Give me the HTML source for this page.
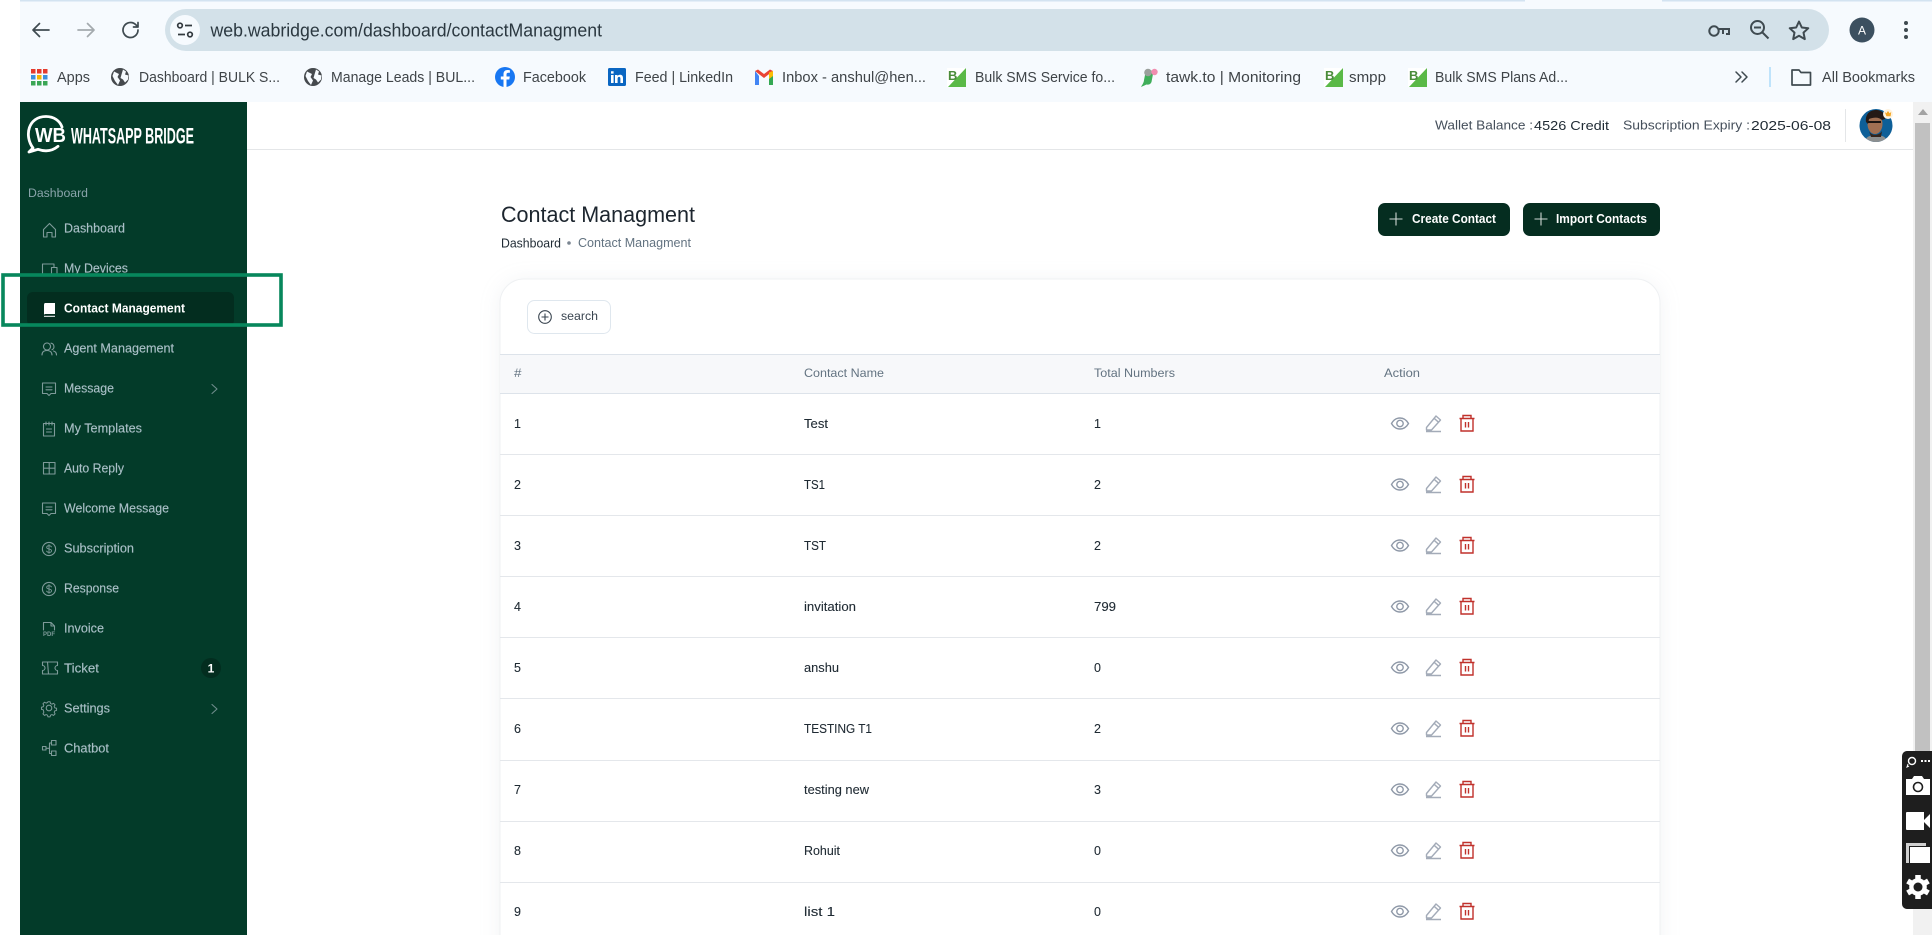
<!DOCTYPE html>
<html lang="en"><head><meta charset="utf-8"><title>Contact Managment</title>
<style>
html,body{margin:0;padding:0;background:#fff;width:1932px;height:935px;overflow:hidden}
svg{display:block;font-family:"Liberation Sans",Arial,sans-serif}
.bm{font-size:14.5px;fill:#3f4448}
.nav{font-size:12.5px;fill:#a9bfc6;stroke:#a9bfc6;stroke-width:.15}
.th{font-size:12.3px;fill:#637381}
.td{font-size:12.5px;fill:#1f2a33;stroke:#1f2a33;stroke-width:.1}
.ic{fill:none;stroke:#7e9a99;stroke-width:1.1;stroke-linejoin:round;stroke-linecap:round}
.cr{fill:none;stroke:#3f4a50;stroke-width:1.7;stroke-linecap:round;stroke-linejoin:round}
</style></head><body>
<svg width="1932" height="935" viewBox="0 0 1932 935" xmlns="http://www.w3.org/2000/svg">
<defs>
<g id="dollar"><circle cx="8" cy="8" r="6.6"/><path d="M10.4 5.9C9.9 5 9 4.7 8 4.7c-1.3 0-2.3.6-2.3 1.7 0 2.4 4.8 1 4.8 3.3 0 1-1 1.7-2.4 1.7-1.1 0-2-.4-2.500-1.3M8 3.6v8.8" stroke-width=".9"/></g>
<g id="msg"><path d="M1.5 2h13v10.5H10L8 14.5 6 12.500H1.500z"/><path d="M5 6h6M5 8.800h6"/></g>
<g id="eye" fill="none" stroke="#8f99a8" stroke-width="1.400"><path d="M.5 8c2-3.500 5-5.500 8.500-5.500S15.500 4.500 17.500 8c-2 3.500-5 5.500-8.500 5.500S2.500 11.500.5 8z"/><circle cx="9" cy="8" r="3.200"/></g>
<g id="pen" fill="none" stroke="#a3abb8" stroke-width="1.400" stroke-linejoin="round"><path d="M1.500 12 11 .5l4.500 4-9 10H1.500zM9 2.700l4.500 4M1 16h15"/></g>
<g id="trash" fill="none" stroke="#c0312b" stroke-width="1.400"><path d="M0 3.500h15M3.500 3.500V.5h8v3M1.500 3.500V16h12V3.500M6 7v5.500M9 7v5.500"/></g>
<g id="acts"><use href="#eye" x="1391" y="-8"/><use href="#pen" x="1425" y="-8"/><use href="#trash" x="1459.500" y="-8.500"/></g>
<g id="globe"><circle cx="9" cy="9" r="9" fill="#45494d"/><path d="M3 3.500 8 6 6.500 9 9 12.500 7 17 4 13 1.500 8zM12 1.500l3 2-1 3 3.500 1-.5 4-3 3-2-3-2.500-1.500 1-3.500z" fill="#f6fafe"/></g>
<g id="bb"><rect width="19" height="19" fill="#fff"/><path d="M19 0V19H1z" fill="#5ab947"/><text x="1" y="12" font-size="13" font-weight="bold" fill="#4a8c3a">B</text></g>
</defs>

<!-- browser chrome -->
<rect x="20" y="0" width="1912" height="102" fill="#f6fafe"/>
<rect x="20" y="0" width="1505" height="1.500" fill="#d3e3f1"/>
<rect x="1662" y="0" width="270" height="1.500" fill="#d3e3f1"/>
<path class="cr" d="M33 30h16M39.500 23.500 33 30l6.500 6.500"/>
<path class="cr" style="stroke:#a4aaae" d="M94 30H78M87.500 23.500 94 30l-6.500 6.500"/>
<path class="cr" d="M138 30a7.500 7.500 0 1 1-2.200-5.300L138 27M138 22.500V27h-4.500"/>
<rect x="165" y="9" width="1664" height="42" rx="21" fill="#d3e1e9"/>
<circle cx="185" cy="30" r="15" fill="#f6fafe"/>
<g fill="none" stroke="#333a3f" stroke-width="1.700"><circle cx="180" cy="25.500" r="2.300"/><path d="M185 25.500h7M178 34.500h7"/><circle cx="190" cy="34.500" r="2.300"/></g>
<text x="210.500" y="36.500" font-size="18" fill="#2b3840" textLength="391.500" lengthAdjust="spacingAndGlyphs">web.wabridge.com/dashboard/contactManagment</text>
<g fill="none" stroke="#3f4a50" stroke-width="2"><circle cx="1714" cy="31" r="4.700"/><path d="M1719 29h10v5h-3M1723 29v5"/><circle cx="1757.500" cy="27.500" r="6.500"/><path d="M1754 27.500h7M1762.500 32.500l6 6"/><path d="M1799 21.500l2.800 6 6.500.7-4.800 4.400 1.300 6.500-5.800-3.300-5.800 3.300 1.300-6.500-4.800-4.400 6.500-.7z" stroke-linejoin="round"/></g>
<circle cx="1862" cy="30" r="12.500" fill="#3c5060"/>
<text x="1862" y="34.500" font-size="12" fill="#fff" text-anchor="middle">A</text>
<g fill="#3f4a50"><circle cx="1906" cy="23" r="2"/><circle cx="1906" cy="30" r="2"/><circle cx="1906" cy="37" r="2"/></g>

<!-- bookmarks -->
<g><g fill="#e53a2c"><rect x="31" y="69" width="4.500" height="4.500"/><rect x="37" y="69" width="4.500" height="4.500"/><rect x="43" y="69" width="4.500" height="4.500"/></g><g fill="#3d8fdc"><rect x="31" y="75" width="4.500" height="4.500"/><rect x="43" y="75" width="4.500" height="4.500"/></g><rect x="37" y="75" width="4.500" height="4.500" fill="#f4b400"/><g fill="#3aa655"><rect x="31" y="81" width="4.500" height="4.500"/><rect x="37" y="81" width="4.500" height="4.500"/><rect x="43" y="81" width="4.500" height="4.500"/></g></g>
<text class="bm" x="57" y="82" textLength="33" lengthAdjust="spacingAndGlyphs">Apps</text>
<use href="#globe" x="111" y="68"/>
<text class="bm" x="139" y="82" textLength="141" lengthAdjust="spacingAndGlyphs">Dashboard | BULK S...</text>
<use href="#globe" x="304" y="68"/>
<text class="bm" x="331" y="82" textLength="144" lengthAdjust="spacingAndGlyphs">Manage Leads | BUL...</text>
<circle cx="505" cy="77" r="10" fill="#1877f2"/><path d="M506.500 87v-7.500h2.800l.5-3h-3.300v-2c0-1 .5-1.700 1.800-1.700h1.600v-2.600c-.8-.1-1.500-.2-2.400-.2-2.500 0-4 1.500-4 4.100v2.400h-2.700v3h2.700V87z" fill="#fff"/>
<text class="bm" x="523" y="82" textLength="63" lengthAdjust="spacingAndGlyphs">Facebook</text>
<rect x="608" y="68" width="18" height="18" rx="1.500" fill="#0a66c2"/><path d="M611 75h2.600v8H611zM611 71.300h2.600v2.300H611zM615 75h2.500v1.100c.5-.8 1.400-1.300 2.500-1.300 2.100 0 3 1.300 3 3.500V83h-2.600v-4.200c0-1.200-.4-1.900-1.300-1.900-1 0-1.500.8-1.500 1.900V83H615z" fill="#fff"/>
<text class="bm" x="635" y="82" textLength="98" lengthAdjust="spacingAndGlyphs">Feed | LinkedIn</text>
<path d="M755 71v14h4v-9z" fill="#4285f4"/><path d="M773 71v14h-4v-9z" fill="#34a853"/><path d="M755 71l9 7 9-7-3-1.500-6 4.500-6-4.500z" fill="#ea4335"/><path d="M769 72.500l4-1.500v5l-4 3z" fill="#fbbc04"/>
<text class="bm" x="782" y="82" textLength="144" lengthAdjust="spacingAndGlyphs">Inbox - anshul@hen...</text>
<use href="#bb" x="947" y="68"/>
<text class="bm" x="975" y="82" textLength="140" lengthAdjust="spacingAndGlyphs">Bulk SMS Service fo...</text>
<path d="M1146 70c3-1 7 0 7 4l-1.500 8c-1 2.500-3.500 3-5 2.500L1141 87c1-2 3-4.500 3-7z" fill="#3fae5a"/><circle cx="1148" cy="72.500" r="3.800" fill="#9aa09c"/><circle cx="1154.500" cy="72" r="3.200" fill="#f08db0"/>
<text class="bm" x="1166" y="82" textLength="135" lengthAdjust="spacingAndGlyphs">tawk.to | Monitoring</text>
<use href="#bb" x="1324" y="68"/>
<text class="bm" x="1349" y="82" textLength="37" lengthAdjust="spacingAndGlyphs">smpp</text>
<use href="#bb" x="1408" y="68"/>
<text class="bm" x="1435" y="82" textLength="133" lengthAdjust="spacingAndGlyphs">Bulk SMS Plans Ad...</text>
<path class="cr" style="stroke-width:1.500" d="M1736 72l5 5-5 5M1742 72l5 5-5 5"/>
<rect x="1769" y="67" width="2" height="20" fill="#bfe3fb"/>
<path d="M1792 70h7l2 2.500h9.500V85H1792z" fill="none" stroke="#3f4a50" stroke-width="1.700" stroke-linejoin="round"/>
<text class="bm" x="1822" y="82" textLength="93" lengthAdjust="spacingAndGlyphs">All Bookmarks</text>

<!-- header -->
<rect x="247" y="149" width="1666" height="1" fill="#e4e6e8"/>
<text x="1435" y="129.500" font-size="13" fill="#454f5b" textLength="98" lengthAdjust="spacingAndGlyphs">Wallet Balance :</text>
<text x="1534" y="130" font-size="13" fill="#1f2a33" textLength="75" lengthAdjust="spacingAndGlyphs">4526 Credit</text>
<text x="1623" y="129.500" font-size="13" fill="#454f5b" textLength="127" lengthAdjust="spacingAndGlyphs">Subscription Expiry :</text>
<text x="1751" y="130" font-size="13" fill="#1f2a33" textLength="80" lengthAdjust="spacingAndGlyphs">2025-06-08</text>
<rect x="1845" y="109" width="1" height="33" fill="#e4e6e8"/>
<clipPath id="av"><circle cx="1876" cy="125.500" r="16.500"/></clipPath>
<g clip-path="url(#av)"><rect x="1859" y="108" width="34" height="35" fill="#0e5f98"/><path d="M1864 143c1-6 6-8 12-8s11 2 12 8z" fill="#8c8f90"/><ellipse cx="1875" cy="124" rx="7.500" ry="10" fill="#a06f52"/><path d="M1866 122c-1-8 4-12 10-12s10 4 9 9l-3 1c-3-3-8-3-13-1l-1 5z" fill="#251a16"/><path d="M1869 131c2 5 10 5 13 0l-1 6h-10z" fill="#33241d"/><path d="M1868 122h13" stroke="#1a1412" stroke-width="2"/></g>
<circle cx="1888" cy="114" r="5" fill="#fff3df"/><path d="M1884.800 112l1.600 1.300 1.600-2.300 1.600 2.300 1.600-1.300-.6 4.200h-4.200z" fill="#f5a623"/>

<!-- sidebar -->
<rect x="20" y="102" width="227" height="833" fill="#033b29"/>
<path d="M33 148C24 136 28 116.500 46 116.500c8 0 14 4.500 16 10.500M33 148l-4 4 9-2.700c7 2.500 14 2 20-3" fill="none" stroke="#fff" stroke-width="2.800" stroke-linejoin="round" stroke-linecap="round"/>
<text x="35" y="142" font-size="20" font-weight="bold" fill="#fff" textLength="31" lengthAdjust="spacingAndGlyphs">WB</text>
<text x="71" y="143.500" font-size="22" font-weight="bold" fill="#fff" textLength="123" lengthAdjust="spacingAndGlyphs">WHATSAPP BRIDGE</text>
<text x="28" y="197" font-size="12.300" fill="#8aa4ab" textLength="60" lengthAdjust="spacingAndGlyphs">Dashboard</text>

<rect x="27" y="292" width="207" height="34" rx="6" fill="#032d1f"/>

<g class="ic">
<path transform="translate(42 222)" d="M1.500 7.500 7.500 1.500l6 6V15H10v-4.500H5V15H1.500z"/>
<path transform="translate(42 263)" d="M10 12H.5V1h11.500v3M9.500 4.500h5.500V13H9.500z"/>
<path transform="translate(41 342)" d="M1 13c0-3 2-4.500 5-4.500s5 1.500 5 4.500M10 1.200a3.500 3.500 0 0 1 1 6.600M12.500 9c2 .5 3 2 3 4M6 1a3.500 3.500 0 1 0 .01 0"/>
<use href="#msg" transform="translate(41 381)"/>
<path transform="translate(43 421)" d="M.5 2.500h11V15H.5zM3 1v3M6 1v3M9 1v3M3.500 8h5M3.500 11h5"/>
<path transform="translate(43 462)" d="M.5.500H12V12H.5zM6.200.500V12M.5 6.200H12"/>
<use href="#msg" transform="translate(41 501)"/>
<use href="#dollar" transform="translate(41 541)"/>
<use href="#dollar" transform="translate(41 581)"/>
<path transform="translate(43 622)" d="M.5 8V.5H8L11.500 4v4M8 .5V4h3.500"/>
<path transform="translate(42 661)" d="M.5 1h15v3.500a2.500 2.500 0 0 0 0 5V13H.5V9.500a2.500 2.500 0 0 0 0-5zM5.500 1l1 12"/>
<g transform="translate(41 700)"><circle cx="8" cy="8" r="2.800"/><path d="M6.800 1h2.400l.5 2 1.600.7 1.800-1 1.700 1.700-1 1.800.7 1.600 2 .5v2.400l-2 .5-.7 1.600 1 1.800-1.700 1.700-1.800-1-1.600.7-.5 2H6.800l-.5-2-1.600-.7-1.800 1-1.700-1.700 1-1.800L1.500 10l-2-.5V7.100l2-.5.7-1.600-1-1.800 1.700-1.700 1.800 1 1.600-.7z" transform="translate(.9 .9) scale(.89)"/></g>
<path transform="translate(42 740)" d="M.5 6.500h3.500V10H.5zM4 8.300h3M9.500 3H7.500v10.500h2M9.500.5H14V5H9.500zM9.500 11H14v4.500H9.500z"/>
<path d="M212 384.500l5 4.500-5 4.500M212 704.500l5 4.500-5 4.500" stroke="#6f8c8c"/>
</g>
<text x="43" y="636" font-size="6" font-weight="bold" fill="#7e9a99" textLength="12" lengthAdjust="spacingAndGlyphs">PDF</text>
<path d="M45 303h10v11H45.500c-1 0-1.500.5-1.500 1V305c0-1 .5-2 1-2z" fill="#fff"/><path d="M44 316.300h11" stroke="#fff"/>

<text class="nav" x="64" y="232.500" textLength="61" lengthAdjust="spacingAndGlyphs">Dashboard</text>
<text class="nav" x="64" y="272.500" textLength="64" lengthAdjust="spacingAndGlyphs">My Devices</text>
<text x="64" y="312.500" font-size="12.500" font-weight="bold" fill="#fff" textLength="121" lengthAdjust="spacingAndGlyphs">Contact Management</text>
<text class="nav" x="64" y="352.500" textLength="110" lengthAdjust="spacingAndGlyphs">Agent Management</text>
<text class="nav" x="64" y="392.500" textLength="50" lengthAdjust="spacingAndGlyphs">Message</text>
<text class="nav" x="64" y="432.500" textLength="78" lengthAdjust="spacingAndGlyphs">My Templates</text>
<text class="nav" x="64" y="472.500" textLength="60" lengthAdjust="spacingAndGlyphs">Auto Reply</text>
<text class="nav" x="64" y="512.500" textLength="105" lengthAdjust="spacingAndGlyphs">Welcome Message</text>
<text class="nav" x="64" y="552.500" textLength="70" lengthAdjust="spacingAndGlyphs">Subscription</text>
<text class="nav" x="64" y="592.500" textLength="55" lengthAdjust="spacingAndGlyphs">Response</text>
<text class="nav" x="64" y="632.500" textLength="40" lengthAdjust="spacingAndGlyphs">Invoice</text>
<text class="nav" x="64" y="672.500" textLength="35" lengthAdjust="spacingAndGlyphs">Ticket</text>
<text class="nav" x="64" y="712.500" textLength="46" lengthAdjust="spacingAndGlyphs">Settings</text>
<text class="nav" x="64" y="752.500" textLength="45" lengthAdjust="spacingAndGlyphs">Chatbot</text>
<circle cx="211" cy="668" r="10" fill="#032d1f"/>
<text x="211" y="672.500" font-size="12" font-weight="bold" fill="#fff" text-anchor="middle">1</text>

<!-- highlight frame -->
<rect x="3" y="275" width="278" height="50" fill="none" stroke="#07875c" stroke-width="3.600"/>

<!-- page title -->
<text x="501" y="222" font-size="22" fill="#1c252e" textLength="194" lengthAdjust="spacingAndGlyphs">Contact Managment</text>
<text x="501" y="247.500" font-size="12.500" fill="#1f2a33" textLength="60" lengthAdjust="spacingAndGlyphs">Dashboard</text>
<circle cx="569" cy="243" r="1.800" fill="#7a8591"/>
<text x="578" y="247" font-size="12.500" fill="#637381" textLength="113" lengthAdjust="spacingAndGlyphs">Contact Managment</text>

<rect x="1378" y="203" width="132" height="33" rx="7" fill="#052d20"/>
<path d="M1396 212.500v13M1389.500 219h13" stroke="#cfd8d4" stroke-width="1.100"/>
<text x="1412" y="223" font-size="12.500" font-weight="bold" fill="#fff" textLength="84" lengthAdjust="spacingAndGlyphs">Create Contact</text>
<rect x="1523" y="203" width="137" height="33" rx="7" fill="#052d20"/>
<path d="M1541 212.500v13M1534.500 219h13" stroke="#cfd8d4" stroke-width="1.100"/>
<text x="1556" y="223" font-size="12.500" font-weight="bold" fill="#fff" textLength="91" lengthAdjust="spacingAndGlyphs">Import Contacts</text>

<!-- card -->
<rect x="500" y="279" width="1160" height="700" rx="24" fill="#fff" stroke="#eff1f3" style="filter:drop-shadow(0 2px 10px rgba(145,158,171,.12))"/>
<rect x="527.500" y="300.500" width="83" height="33" rx="7" fill="#fff" stroke="#dfe7ee"/>
<circle cx="545" cy="317" r="6.300" fill="none" stroke="#3a4550" stroke-width="1.100"/>
<path d="M545 313.500v7M541.500 317h7" stroke="#3a4550" stroke-width="1.100"/>
<text x="561" y="320" font-size="12.300" fill="#3a4550" textLength="37" lengthAdjust="spacingAndGlyphs">search</text>

<rect x="500" y="354" width="1160" height="39" fill="#f7f8fa"/>
<g fill="#dde3ea"><rect x="500" y="354" width="1160" height="1"/><rect x="500" y="393" width="1160" height="1"/></g>
<text class="th" x="514" y="377" textLength="7.500" lengthAdjust="spacingAndGlyphs">#</text>
<text class="th" x="804" y="377" textLength="80" lengthAdjust="spacingAndGlyphs">Contact Name</text>
<text class="th" x="1094" y="377" textLength="81" lengthAdjust="spacingAndGlyphs">Total Numbers</text>
<text class="th" x="1384" y="377" textLength="36" lengthAdjust="spacingAndGlyphs">Action</text>

<g fill="#e4e7eb"><rect x="500" y="454" width="1160" height="1"/><rect x="500" y="515" width="1160" height="1"/><rect x="500" y="576" width="1160" height="1"/><rect x="500" y="637" width="1160" height="1"/><rect x="500" y="698" width="1160" height="1"/><rect x="500" y="760" width="1160" height="1"/><rect x="500" y="821" width="1160" height="1"/><rect x="500" y="882" width="1160" height="1"/></g>

<text class="td" x="514" y="428">1</text><text class="td" x="804" y="428" textLength="24" lengthAdjust="spacingAndGlyphs">Test</text><text class="td" x="1094" y="428">1</text><use href="#acts" y="423.500"/>
<text class="td" x="514" y="489">2</text><text class="td" x="804" y="489" textLength="21" lengthAdjust="spacingAndGlyphs">TS1</text><text class="td" x="1094" y="489">2</text><use href="#acts" y="484.500"/>
<text class="td" x="514" y="550">3</text><text class="td" x="804" y="550" textLength="22" lengthAdjust="spacingAndGlyphs">TST</text><text class="td" x="1094" y="550">2</text><use href="#acts" y="545.500"/>
<text class="td" x="514" y="611">4</text><text class="td" x="804" y="611" textLength="52" lengthAdjust="spacingAndGlyphs">invitation</text><text class="td" x="1094" y="611" textLength="22" lengthAdjust="spacingAndGlyphs">799</text><use href="#acts" y="606.500"/>
<text class="td" x="514" y="672">5</text><text class="td" x="804" y="672" textLength="35" lengthAdjust="spacingAndGlyphs">anshu</text><text class="td" x="1094" y="672">0</text><use href="#acts" y="667.500"/>
<text class="td" x="514" y="733">6</text><text class="td" x="804" y="733" textLength="68" lengthAdjust="spacingAndGlyphs">TESTING T1</text><text class="td" x="1094" y="733">2</text><use href="#acts" y="728.500"/>
<text class="td" x="514" y="794">7</text><text class="td" x="804" y="794" textLength="65" lengthAdjust="spacingAndGlyphs">testing new</text><text class="td" x="1094" y="794">3</text><use href="#acts" y="789.500"/>
<text class="td" x="514" y="855">8</text><text class="td" x="804" y="855" textLength="36" lengthAdjust="spacingAndGlyphs">Rohuit</text><text class="td" x="1094" y="855">0</text><use href="#acts" y="850.500"/>
<text class="td" x="514" y="916">9</text><text class="td" x="804" y="916" textLength="31" lengthAdjust="spacingAndGlyphs">list 1</text><text class="td" x="1094" y="916">0</text><use href="#acts" y="911.500"/>

<!-- scrollbar -->
<rect x="1913" y="102" width="19" height="833" fill="#f1f1f1"/>
<path d="M1923 109l-5 6h10z" fill="#a3a3a3"/>
<rect x="1915" y="123" width="15" height="680" fill="#c1c1c1"/>

<!-- capture widget -->
<path d="M1932 751h-25a5 5 0 0 0-5 5v148a5 5 0 0 0 5 5h25z" fill="#1e1e1e"/>
<circle cx="1912" cy="761" r="3.500" fill="none" stroke="#fff" stroke-width="1.400"/><path d="M1909 766l-2 1 1-3" stroke="#fff"/>
<g fill="#fff"><rect x="1921" y="760" width="2" height="2"/><rect x="1924.500" y="760" width="2" height="2"/><rect x="1928" y="760" width="2" height="2"/></g>
<path d="M1906 779h6l2-3h8l2 3h6v16h-24z" fill="#fff"/><circle cx="1918" cy="787" r="4.500" fill="#fff" stroke="#1e1e1e" stroke-width="1.600"/>
<path d="M1906 813a1 1 0 0 1 1-1h17v8l6-6v14l-6-6v8h-17a1 1 0 0 1-1-1z" fill="#fff"/>
<path d="M1906 843h20v3h-17v17h-3z" fill="#d0d0d0"/><rect x="1910" y="847" width="20" height="16" fill="#fff"/>
<circle cx="1918" cy="887" r="8.800" fill="#fff"/>
<path d="M1918 875v24M1907.600 881l20.800 12M1907.600 893l20.800-12" stroke="#fff" stroke-width="5.500"/>
<circle cx="1918" cy="887" r="4.500" fill="#1e1e1e"/>
</svg>
</body></html>
